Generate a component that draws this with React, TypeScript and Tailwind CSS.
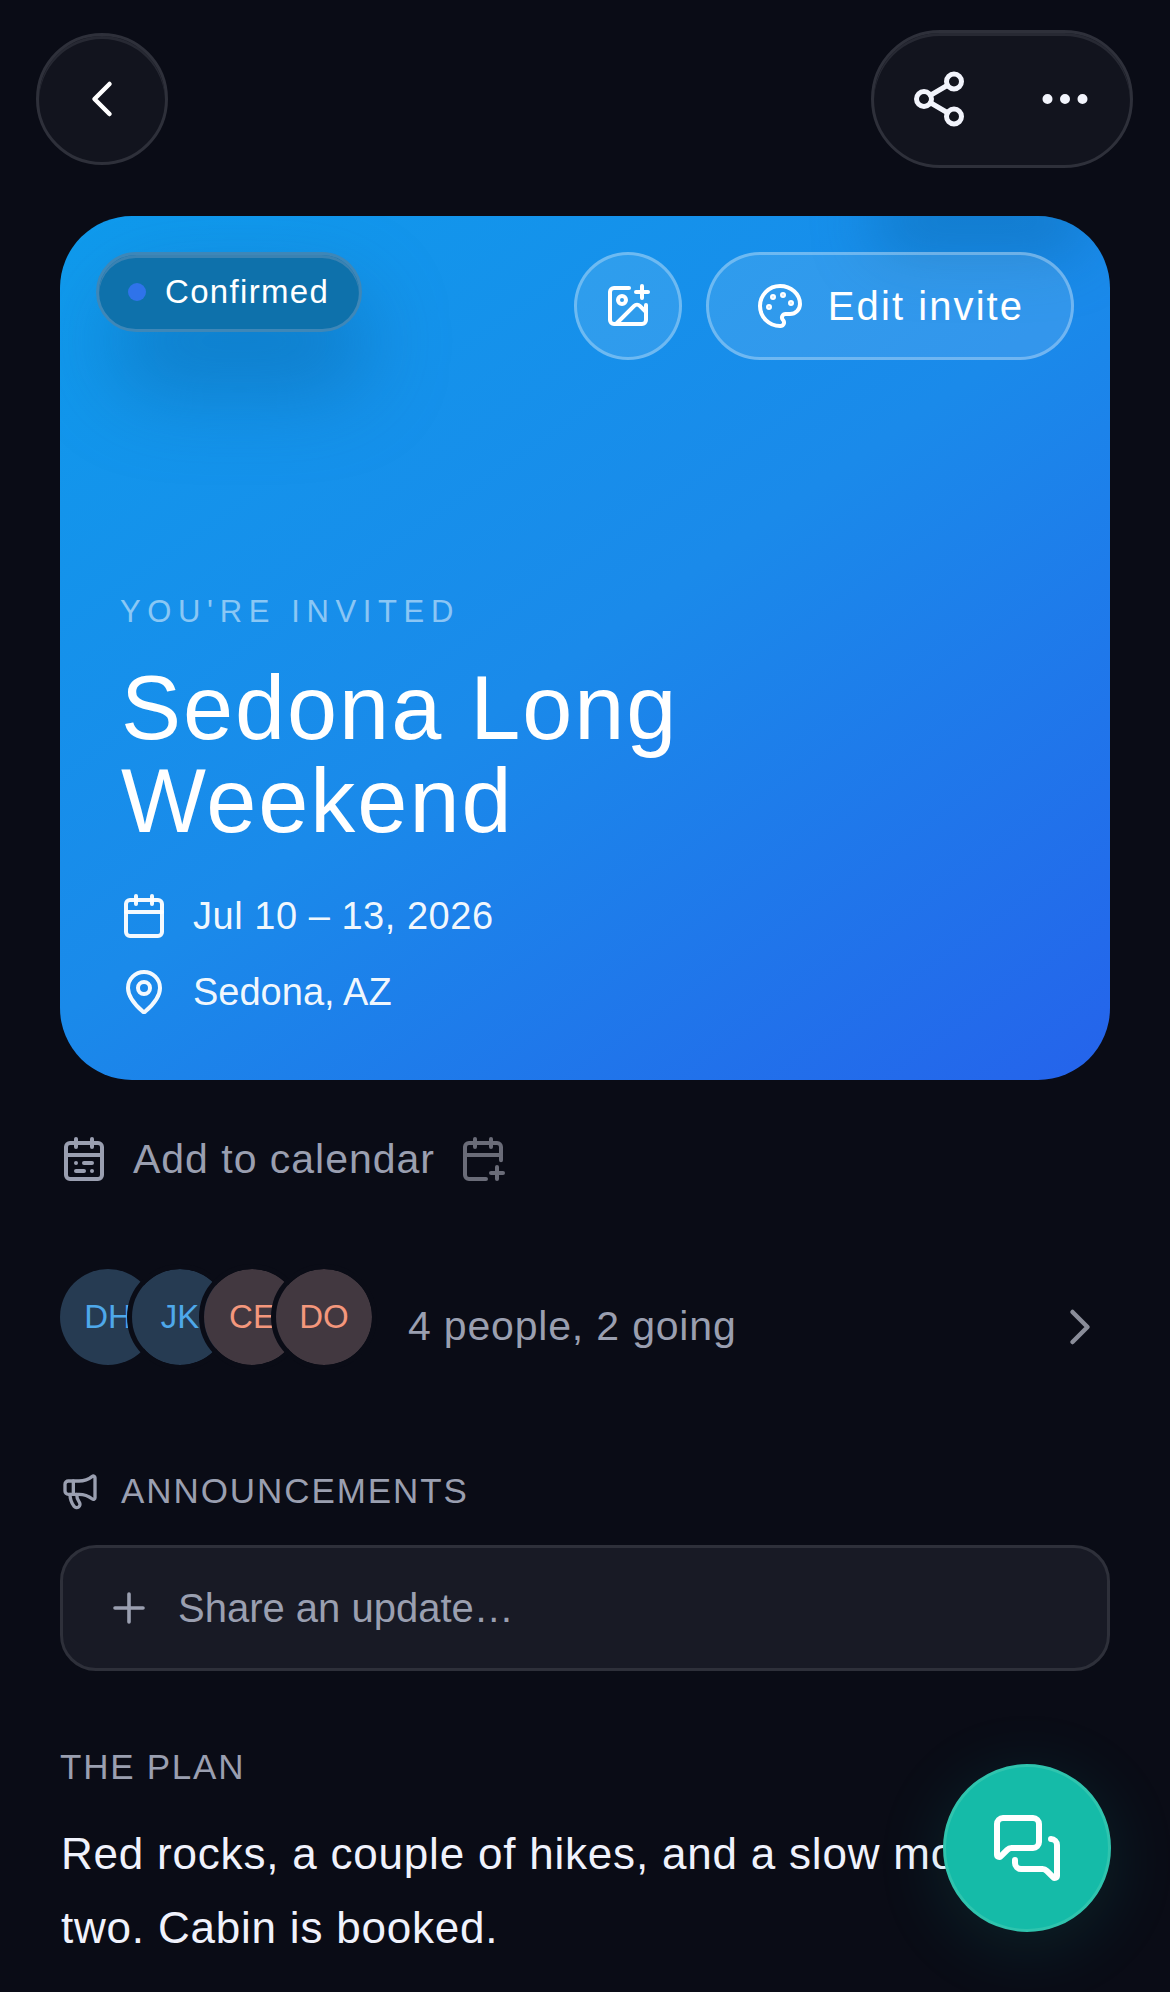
import { ChevronLeft, ChevronRight, Share2, Ellipsis, ImagePlus, Palette, Calendar, MapPin, CalendarPlus, Megaphone, Plus, MessagesSquare } from "lucide-react";

const people = [
    { initials: "DH", bg: "bg-[#263b52]", text: "text-[#4ea8ea]" },
    { initials: "JK", bg: "bg-[#263b52]", text: "text-[#4ea8ea]" },
    { initials: "CE", bg: "bg-[#423840]", text: "text-[#f4977c]" },
    { initials: "DO", bg: "bg-[#423840]", text: "text-[#f4977c]" },
];

function CalendarList() {
    return (
        <svg width="48" height="48" viewBox="0 0 24 24" fill="none" stroke="currentColor" strokeWidth="2" strokeLinecap="round" strokeLinejoin="round">
            <path d="M8 2v4" />
            <path d="M16 2v4" />
            <rect x="3" y="4" width="18" height="18" rx="2" />
            <path d="M3 10h18" />
            <path d="M8 14h.01" />
            <path d="M12 14h4" />
            <path d="M8 18h4" />
            <path d="M16 18h.01" />
        </svg>
    );
}

export default function App() {
    return (
        <div className="relative h-[1992px] w-[1170px] overflow-hidden bg-[#0a0c16] font-['Liberation_Sans',sans-serif] text-white">
            {/* Top bar */}
            <div className="flex items-center justify-between pl-9 pr-[37px] pt-[30px]">
                <button className="flex h-[132px] w-[132px] items-center justify-center rounded-full border-[3px] border-[#2e303a] bg-[#12141e] shadow-[inset_0_3px_0_#272933]">
                    <ChevronLeft size={60} strokeWidth={1.8} />
                </button>
                <div className="flex h-[138px] w-[262px] items-center justify-between rounded-full border-[3px] border-[#2e303a] bg-[#12141e] pl-[35px] pr-[35px] text-[#f2f4fc] shadow-[inset_0_3px_0_#272933]">
                    <Share2 size={60} strokeWidth={2} />
                    <Ellipsis size={60} strokeWidth={2} />
                </div>
            </div>

            {/* Invite card */}
            <div className="relative mx-[60px] mt-[48px] h-[864px] overflow-hidden rounded-[72px] bg-[linear-gradient(145deg,#0f9aec_0%,#1a8aea_50%,#2563eb_100%)]">
                <div className="absolute left-[50px] top-[70px] h-[110px] w-[260px] rounded-full bg-[#0b5f9e]/40 blur-[40px]" />
                <div className="absolute -top-[30px] right-[20px] h-[70px] w-[220px] rounded-full bg-[#0b5f9e]/40 blur-[30px]" />
                <div className="relative flex items-start justify-between pl-[36px] pr-[36px] pt-[36px]">
                    <div className="flex h-[80px] w-[266px] items-center gap-[19px] rounded-full border-[3px] border-[#3e87b8] bg-[#0e71ab] pl-[29px] shadow-[inset_0_3px_0_#3a82b2]">
                        <span className="h-[18px] w-[18px] rounded-full bg-[#2f73ea]" />
                        <span className="text-[33px] tracking-[0.04em]">Confirmed</span>
                    </div>
                    <div className="flex items-center gap-[24px]">
                        <button className="flex h-[108px] w-[108px] items-center justify-center rounded-full border-[3px] border-white/30 bg-white/[0.11]">
                            <ImagePlus size={48} strokeWidth={2} />
                        </button>
                        <button className="flex h-[108px] w-[368px] items-center justify-center gap-[24px] rounded-full border-[3px] border-white/30 bg-white/[0.11] text-[40px] tracking-[0.052em]">
                            <Palette size={48} strokeWidth={2} />
                            Edit invite
                        </button>
                    </div>
                </div>
                <div className="relative mt-[234px] pl-[60px]">
                    <div className="text-[31px] leading-[36px] tracking-[0.214em] text-white/50">YOU'RE INVITED</div>
                    <h1 className="ml-[1px] mt-[32px] w-[640px] text-[90px] font-normal leading-[93px] tracking-[0.022em]">Sedona Long Weekend</h1>
                    <div className="mt-[44px] flex items-center gap-[25px] text-[38px] leading-[48px] tracking-[0.014em] text-white/95">
                        <Calendar size={48} strokeWidth={2} />
                        Jul 10 – 13, 2026
                    </div>
                    <div className="mt-[28px] flex items-center gap-[25px] text-[38px] leading-[48px] text-white/95">
                        <MapPin size={48} strokeWidth={2} />
                        Sedona, AZ
                    </div>
                </div>
            </div>

            {/* Add to calendar */}
            <div className="ml-[60px] mt-[50px] flex items-center text-[41px] leading-[58px] tracking-[0.024em] text-[#9a9fb0]">
                <CalendarList />
                <span className="ml-[25px]">Add to calendar</span>
                <CalendarPlus size={48} strokeWidth={2} className="ml-[24px] text-[#6a6c78]" />
            </div>

            {/* People */}
            <div className="mx-[60px] mt-[81px] flex items-center">
                <div className="mb-[20px] flex">
                    {people.map((p, i) => (
                        <div
                            key={p.initials}
                            className={`flex h-[96px] w-[96px] items-center justify-center overflow-hidden rounded-full text-[33px] ${p.bg} ${p.text} ${i > 0 ? "-ml-[24px] outline-[5px] outline-[#0a0c16]" : ""}`}
                        >
                            {p.initials}
                        </div>
                    ))}
                </div>
                <span className="ml-[36px] text-[41px] tracking-[0.02em] text-[#9a9fb0]">4 people, 2 going</span>
                <ChevronRight size={60} strokeWidth={1.8} className="ml-auto text-[#8a8d99]" />
            </div>

            {/* Announcements */}
            <div className="ml-[60px] mt-[82px] flex items-center gap-[21px] text-[35px] leading-[48px] tracking-[0.055em] text-[#9a9fb0]">
                <Megaphone size={40} strokeWidth={2} />
                ANNOUNCEMENTS
            </div>
            <div className="mx-[60px] mt-[30px] flex h-[126px] items-center gap-[25px] rounded-[36px] border-[3px] border-[#2e303a] bg-[#181a25] pl-[42px] text-[40px] text-[#9a9fb0]">
                <Plus size={48} strokeWidth={1.8} />
                Share an update…
            </div>

            {/* Plan */}
            <div className="ml-[60px] mt-[72px] text-[35px] leading-[48px] tracking-[0.05em] text-[#9a9fb0]">THE PLAN</div>
            <p className="ml-[61px] mt-[26px] w-[1075px] text-[44px] leading-[74px] tracking-[0.018em] text-[#f0f2fc]">
                Red rocks, a couple of hikes, and a slow morning or two. Cabin is booked.
            </p>

            {/* Chat FAB */}
            <button className="absolute left-[943px] top-[1764px] flex h-[168px] w-[168px] items-center justify-center rounded-full border-[3px] border-[#2fc4ae] bg-[#15bba8] shadow-[0_12px_72px_rgba(21,187,168,0.14)]">
                <MessagesSquare size={72} strokeWidth={2} />
            </button>
        </div>
    );
}
